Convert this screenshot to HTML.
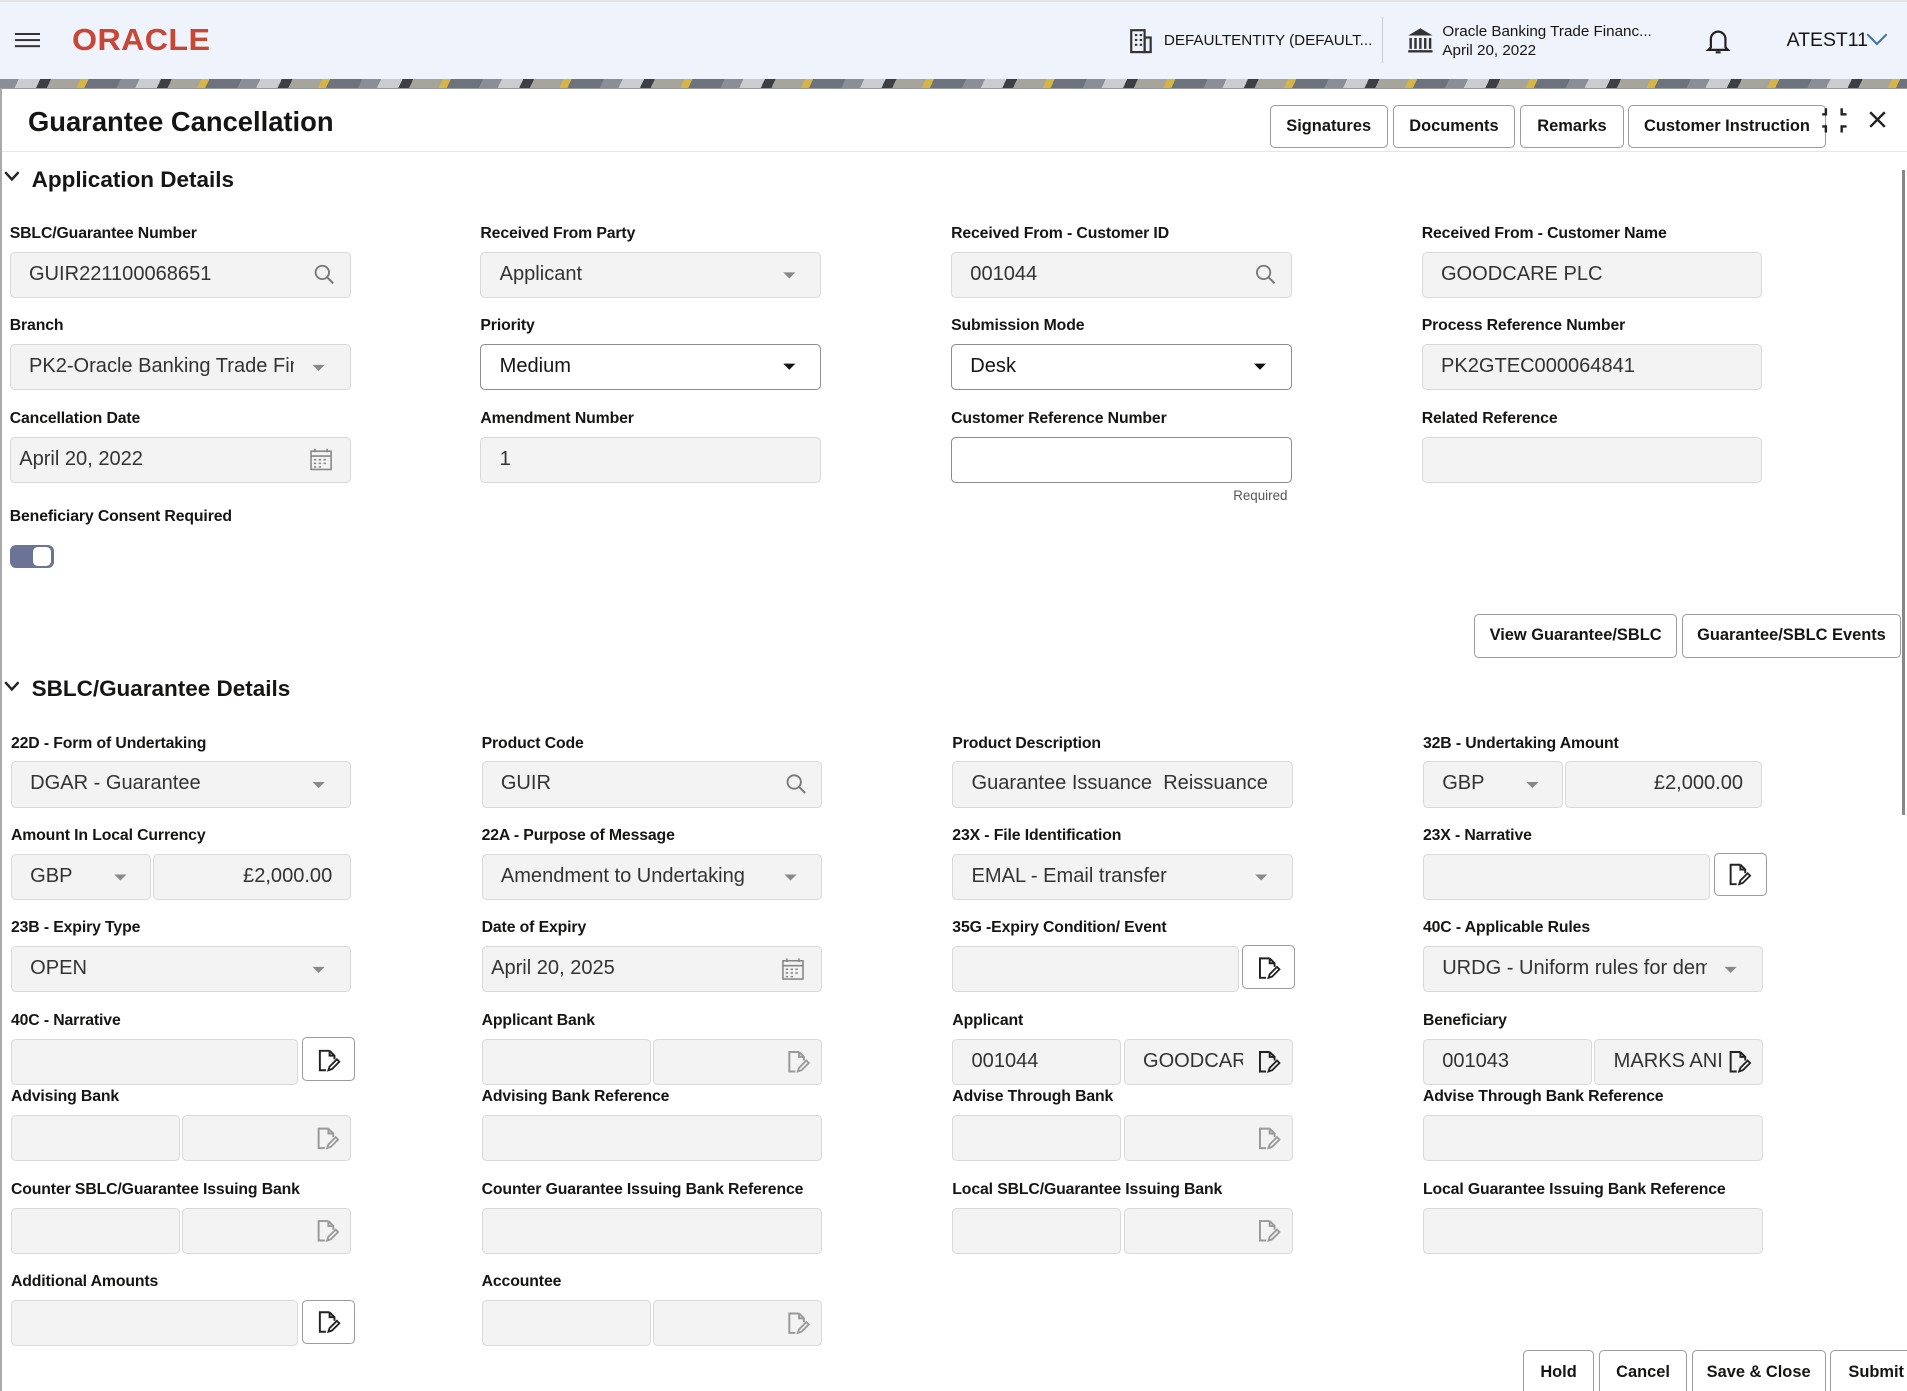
<!DOCTYPE html>
<html><head><meta charset="utf-8"><style>
*{box-sizing:border-box;margin:0;padding:0}
html,body{width:1907px;height:1391px;overflow:hidden;background:#fff}
#root{position:relative;width:1568px;height:1144px;zoom:1.21620;font-family:"Liberation Sans",sans-serif;color:#161513;overflow:hidden}
.a{position:absolute}
.hdr{left:0;top:0;width:1568px;height:65px;background:#eff3fb;border-top:2px solid #e4e4e4}
.band{left:0;top:65px;width:1568px;height:8px;background:repeating-linear-gradient(115deg,#8a8e96 0 14px,#c9ccd1 14px 30px,#3d3f44 30px 38px,#a7a49c 38px 60px,#d7b545 60px 66px,#6d737d 66px 90px)}
.panel{left:0;top:72px;width:1568px;height:1072px;background:#fff;border-left:2px solid #aaa;border-top:1px solid #999}
.l{font-size:13px;font-weight:bold;color:#161513;white-space:nowrap;letter-spacing:-0.1px}
.f{height:38px;border:1px solid #d9d9d9;border-radius:4px;background:#f3f3f3;font-size:16.5px;color:#333;padding:0 15px;line-height:36px;white-space:nowrap;overflow:hidden}
.e{background:#fff;border-color:#8c8c8c;color:#161513}
.btn{height:35px;border:1px solid #9c9c9c;border-radius:4px;background:#fff;font-size:13.5px;font-weight:bold;text-align:center;line-height:33px;color:#161513;white-space:nowrap}
.sec{font-size:18.5px;font-weight:bold}
</style></head><body><div id="root">
<div class="a hdr"></div>
<div class="a" style="left:12px;top:27px;width:21px;height:2px;background:#333;box-shadow:0 5px 0 #333,0 10px 0 #333"></div>
<div class="a" style="left:59px;top:19px;font-size:25px;font-weight:bold;color:#c74634;letter-spacing:0.3px;transform:scaleX(1.06);transform-origin:left">ORACLE</div>
<svg class="a" style="left:929px;top:24px" width="18" height="20" viewBox="0 0 18 20"><rect x="1" y="1" width="11" height="18" fill="none" stroke="#333" stroke-width="1.8"/><rect x="12" y="7" width="5" height="12" fill="none" stroke="#333" stroke-width="1.8"/><path d="M4 5h2M8 5h2M4 9h2M8 9h2M4 13h2M8 13h2" stroke="#333" stroke-width="1.8"/></svg>
<div class="a" style="left:957px;top:26px;font-size:12.5px;color:#161513">DEFAULTENTITY (DEFAULT...</div>
<div class="a" style="left:1136px;top:14px;width:1px;height:38px;background:#ccc"></div>
<svg class="a" style="left:1157px;top:22px" width="22" height="22" viewBox="0 0 22 22"><path d="M1 7L11 1L21 7Z" fill="#333"/><path d="M3 9v9M7 9v9M11 9v9M15 9v9M19 9v9M1 20h20" stroke="#333" stroke-width="2"/></svg>
<div class="a" style="left:1186px;top:18px;font-size:12.5px;line-height:16px">Oracle Banking Trade Financ...<br>April 20, 2022</div>
<svg class="a" style="left:1403px;top:23px" width="20" height="22" viewBox="0 0 20 22"><path d="M4 16V9a6 6 0 0 1 12 0v7l2 2H2z M8 20h4" fill="none" stroke="#222" stroke-width="1.8"/></svg>
<div class="a" style="left:1469px;top:24px;font-size:16px">ATEST11</div>
<svg class="a" style="left:1534px;top:27px" width="18" height="11" viewBox="0 0 18 11"><path d="M1 1l8 8 8-8" fill="none" stroke="#3a6ea5" stroke-width="1.6"/></svg>
<div class="a band"></div>
<div class="a panel"></div>
<div class="a" style="left:23px;top:87px;font-size:22.5px;font-weight:bold">Guarantee Cancellation</div>
<div class="a btn" style="left:1044px;top:86px;width:97px;height:36px;line-height:34px">Signatures</div>
<div class="a btn" style="left:1145px;top:86px;width:101px;height:36px;line-height:34px">Documents</div>
<div class="a btn" style="left:1250px;top:86px;width:85px;height:36px;line-height:34px">Remarks</div>
<div class="a btn" style="left:1339px;top:86px;width:162px;height:36px;line-height:34px">Customer Instruction</div>
<svg class="a" style="left:1497px;top:88px" width="24" height="22" viewBox="0 0 24 22"><path d="M4 1v5H1M17 1v5h4M4 21v-5H1M17 21v-5h4" fill="none" stroke="#222" stroke-width="2"/></svg>
<svg class="a" style="left:1537px;top:91px" width="14" height="14" viewBox="0 0 14 14"><path d="M1 1l12 12M13 1L1 13" stroke="#222" stroke-width="2"/></svg>
<div class="a" style="left:2px;top:124px;width:1566px;height:1px;background:#e6e6e6"></div>
<svg class="a" style="left:3px;top:141px" width="13" height="9" viewBox="0 0 13 9"><path d="M1 1l5.5 6L12 1" fill="none" stroke="#222" stroke-width="2"/></svg>
<div class="a sec" style="left:26px;top:137px">Application Details</div>
<div class="a" style="left:1564px;top:140px;width:2px;height:530px;background:#888"></div>

<div class="a l" style="left:8px;top:185px">SBLC/Guarantee Number</div>
<div class="a f" style="left:8px;top:207px;width:281px">GUIR221100068651</div>
<div class="a l" style="left:395px;top:185px">Received From Party</div>
<div class="a f" style="left:395px;top:207px;width:280px">Applicant</div>
<div class="a l" style="left:782px;top:185px">Received From - Customer ID</div>
<div class="a f" style="left:782px;top:207px;width:280px">001044</div>
<div class="a l" style="left:1169px;top:185px">Received From - Customer Name</div>
<div class="a f" style="left:1169px;top:207px;width:280px">GOODCARE PLC</div>

<div class="a l" style="left:8px;top:261px">Branch</div>
<div class="a f" style="left:8px;top:283px;width:281px"><div style="width:218px;overflow:hidden">PK2-Oracle Banking Trade Fina</div></div>
<div class="a l" style="left:395px;top:261px">Priority</div>
<div class="a f e" style="left:395px;top:283px;width:280px">Medium</div>
<div class="a l" style="left:782px;top:261px">Submission Mode</div>
<div class="a f e" style="left:782px;top:283px;width:280px">Desk</div>
<div class="a l" style="left:1169px;top:261px">Process Reference Number</div>
<div class="a f" style="left:1169px;top:283px;width:280px">PK2GTEC000064841</div>

<div class="a l" style="left:8px;top:337px">Cancellation Date</div>
<div class="a f" style="left:8px;top:359px;width:281px;padding-left:7px">April 20, 2022</div>
<div class="a l" style="left:395px;top:337px">Amendment Number</div>
<div class="a f" style="left:395px;top:359px;width:280px">1</div>
<div class="a l" style="left:782px;top:337px">Customer Reference Number</div>
<div class="a f e" style="left:782px;top:359px;width:280px"></div>
<div class="a" style="left:1014px;top:401px;font-size:11px;color:#555">Required</div>
<div class="a l" style="left:1169px;top:337px">Related Reference</div>
<div class="a f" style="left:1169px;top:359px;width:280px"></div>
<div class="a l" style="left:8px;top:418px">Beneficiary Consent Required</div>
<div class="a" style="left:8px;top:448px;width:36px;height:19px;border-radius:5px;background:#6b7396"></div>
<div class="a" style="left:27px;top:450px;width:15px;height:15px;border-radius:4px;background:#fff"></div>
<div class="a btn" style="left:1212px;top:505px;width:167px;height:36px;line-height:34px">View Guarantee/SBLC</div>
<div class="a btn" style="left:1383px;top:505px;width:180px;height:36px;line-height:34px">Guarantee/SBLC Events</div>

<svg class="a" style="left:3px;top:560px" width="13" height="9" viewBox="0 0 13 9"><path d="M1 1l5.5 6L12 1" fill="none" stroke="#222" stroke-width="2"/></svg>
<div class="a sec" style="left:26px;top:556px">SBLC/Guarantee Details</div>

<div class="a l" style="left:9px;top:604px">22D - Form of Undertaking</div>
<div class="a f" style="left:9px;top:626px;width:280px">DGAR - Guarantee</div>
<div class="a l" style="left:396px;top:604px">Product Code</div>
<div class="a f" style="left:396px;top:626px;width:280px">GUIR</div>
<div class="a l" style="left:783px;top:604px">Product Description</div>
<div class="a f" style="left:783px;top:626px;width:280px"><div style="width:248px;overflow:hidden">Guarantee Issuance&nbsp; Reissuance up</div></div>
<div class="a l" style="left:1170px;top:604px">32B - Undertaking Amount</div>
<div class="a f" style="left:1170px;top:626px;width:115px">GBP</div>
<div class="a f" style="left:1287px;top:626px;width:162px;text-align:right">£2,000.00</div>

<div class="a l" style="left:9px;top:680px">Amount In Local Currency</div>
<div class="a f" style="left:9px;top:702px;width:115px">GBP</div>
<div class="a f" style="left:126px;top:702px;width:163px;text-align:right">£2,000.00</div>
<div class="a l" style="left:396px;top:680px">22A - Purpose of Message</div>
<div class="a f" style="left:396px;top:702px;width:280px">Amendment to Undertaking</div>
<div class="a l" style="left:783px;top:680px">23X - File Identification</div>
<div class="a f" style="left:783px;top:702px;width:280px">EMAL - Email transfer</div>
<div class="a l" style="left:1170px;top:680px">23X - Narrative</div>
<div class="a f" style="left:1170px;top:702px;width:236px"></div>
<div class="a btn" style="left:1409px;top:701px;width:44px;height:36px"></div>

<div class="a l" style="left:9px;top:756px">23B - Expiry Type</div>
<div class="a f" style="left:9px;top:778px;width:280px">OPEN</div>
<div class="a l" style="left:396px;top:756px">Date of Expiry</div>
<div class="a f" style="left:396px;top:778px;width:280px;padding-left:7px">April 20, 2025</div>
<div class="a l" style="left:783px;top:756px">35G -Expiry Condition/ Event</div>
<div class="a f" style="left:783px;top:778px;width:236px"></div>
<div class="a btn" style="left:1021px;top:777px;width:44px;height:36px"></div>
<div class="a l" style="left:1170px;top:756px">40C - Applicable Rules</div>
<div class="a f" style="left:1170px;top:778px;width:280px"><div style="width:218px;overflow:hidden">URDG - Uniform rules for dema</div></div>

<div class="a l" style="left:9px;top:832px">40C - Narrative</div>
<div class="a f" style="left:9px;top:854px;width:236px"></div>
<div class="a btn" style="left:248px;top:853px;width:44px;height:36px"></div>
<div class="a l" style="left:396px;top:832px">Applicant Bank</div>
<div class="a f" style="left:396px;top:854px;width:139px"></div>
<div class="a f" style="left:537px;top:854px;width:139px"></div>
<div class="a l" style="left:783px;top:832px">Applicant</div>
<div class="a f" style="left:783px;top:854px;width:139px">001044</div>
<div class="a f" style="left:924px;top:854px;width:139px"><div style="width:82px;overflow:hidden">GOODCARE</div></div>
<div class="a l" style="left:1170px;top:832px">Beneficiary</div>
<div class="a f" style="left:1170px;top:854px;width:139px">001043</div>
<div class="a f" style="left:1311px;top:854px;width:139px"><div style="width:88px;overflow:hidden">MARKS ANI</div></div>

<div class="a l" style="left:9px;top:895px">Advising Bank</div>
<div class="a f" style="left:9px;top:917px;width:139px"></div>
<div class="a f" style="left:150px;top:917px;width:139px"></div>
<div class="a l" style="left:396px;top:895px">Advising Bank Reference</div>
<div class="a f" style="left:396px;top:917px;width:280px"></div>
<div class="a l" style="left:783px;top:895px">Advise Through Bank</div>
<div class="a f" style="left:783px;top:917px;width:139px"></div>
<div class="a f" style="left:924px;top:917px;width:139px"></div>
<div class="a l" style="left:1170px;top:895px">Advise Through Bank Reference</div>
<div class="a f" style="left:1170px;top:917px;width:280px"></div>

<div class="a l" style="left:9px;top:971px">Counter SBLC/Guarantee Issuing Bank</div>
<div class="a f" style="left:9px;top:993px;width:139px"></div>
<div class="a f" style="left:150px;top:993px;width:139px"></div>
<div class="a l" style="left:396px;top:971px">Counter Guarantee Issuing Bank Reference</div>
<div class="a f" style="left:396px;top:993px;width:280px"></div>
<div class="a l" style="left:783px;top:971px">Local SBLC/Guarantee Issuing Bank</div>
<div class="a f" style="left:783px;top:993px;width:139px"></div>
<div class="a f" style="left:924px;top:993px;width:139px"></div>
<div class="a l" style="left:1170px;top:971px">Local Guarantee Issuing Bank Reference</div>
<div class="a f" style="left:1170px;top:993px;width:280px"></div>

<div class="a l" style="left:9px;top:1047px">Additional Amounts</div>
<div class="a f" style="left:9px;top:1069px;width:236px"></div>
<div class="a btn" style="left:248px;top:1069px;width:44px;height:36px"></div>
<div class="a l" style="left:396px;top:1047px">Accountee</div>
<div class="a f" style="left:396px;top:1069px;width:139px"></div>
<div class="a f" style="left:537px;top:1069px;width:139px"></div>

<div class="a btn" style="left:1252px;top:1110px;width:59px;height:40px;line-height:36px">Hold</div>
<div class="a btn" style="left:1315px;top:1110px;width:72px;height:40px;line-height:36px">Cancel</div>
<div class="a btn" style="left:1391px;top:1110px;width:110px;height:40px;line-height:36px">Save &amp; Close</div>
<div class="a btn" style="left:1505px;top:1110px;width:70px;height:40px;line-height:36px;text-align:left;padding-left:14px">Submit</div>

<svg class="a" style="left:0;top:0;pointer-events:none" width="1568" height="1144">
<defs>
<g id="srch"><circle cx="6" cy="6" r="5.5" fill="none" stroke="#777" stroke-width="1.5"/><path d="M10 10l5 5" stroke="#777" stroke-width="1.6"/></g>
<path id="car" d="M0 0h10l-5 5z"/>
<g id="cal"><rect x="0.75" y="2" width="16.5" height="15" fill="none" stroke="#888" stroke-width="1.3"/><path d="M1 6h16M4 0v3M14 0v3M3 9h2M7 9h2M11 9h2M3 12h2M7 12h2M11 12h2M3 15h2M7 15h2" stroke="#888" stroke-width="1.3"/></g>
<g id="doc"><path d="M9 1H1v16h5M9 1l4 4v3M9 1v4h4" fill="none" stroke-width="1.6"/><path d="M8 17l1-3 6-6 2 2-6 6z" fill="none" stroke-width="1.5"/></g>
</defs>
<use href="#srch" x="259" y="218"/><use href="#srch" x="1033" y="218"/><use href="#srch" x="647" y="637"/>
<use href="#car" x="644" y="224" fill="#888"/>
<use href="#car" x="257" y="300" fill="#888"/>
<use href="#car" x="644" y="299" fill="#111"/>
<use href="#car" x="1031" y="299" fill="#111"/>
<use href="#car" x="257" y="643" fill="#888"/>
<use href="#car" x="1255" y="643" fill="#888"/>
<use href="#car" x="94" y="719" fill="#888"/>
<use href="#car" x="645" y="719" fill="#888"/>
<use href="#car" x="1032" y="719" fill="#888"/>
<use href="#car" x="257" y="795" fill="#888"/>
<use href="#car" x="1418" y="795" fill="#888"/>
<use href="#cal" x="255" y="369"/><use href="#cal" x="643" y="788"/>
<use href="#doc" x="1422" y="710" stroke="#222"/>
<use href="#doc" x="1035" y="787" stroke="#222"/>
<use href="#doc" x="262" y="863" stroke="#222"/>
<use href="#doc" x="262" y="1078" stroke="#222"/>
<use href="#doc" x="1035" y="864" stroke="#222"/>
<use href="#doc" x="1422" y="864" stroke="#222"/>
<use href="#doc" x="648" y="864" stroke="#999"/>
<use href="#doc" x="261" y="927" stroke="#999"/>
<use href="#doc" x="1035" y="927" stroke="#999"/>
<use href="#doc" x="261" y="1003" stroke="#999"/>
<use href="#doc" x="1035" y="1003" stroke="#999"/>
<use href="#doc" x="648" y="1079" stroke="#999"/>
</svg>
</div></body></html>
